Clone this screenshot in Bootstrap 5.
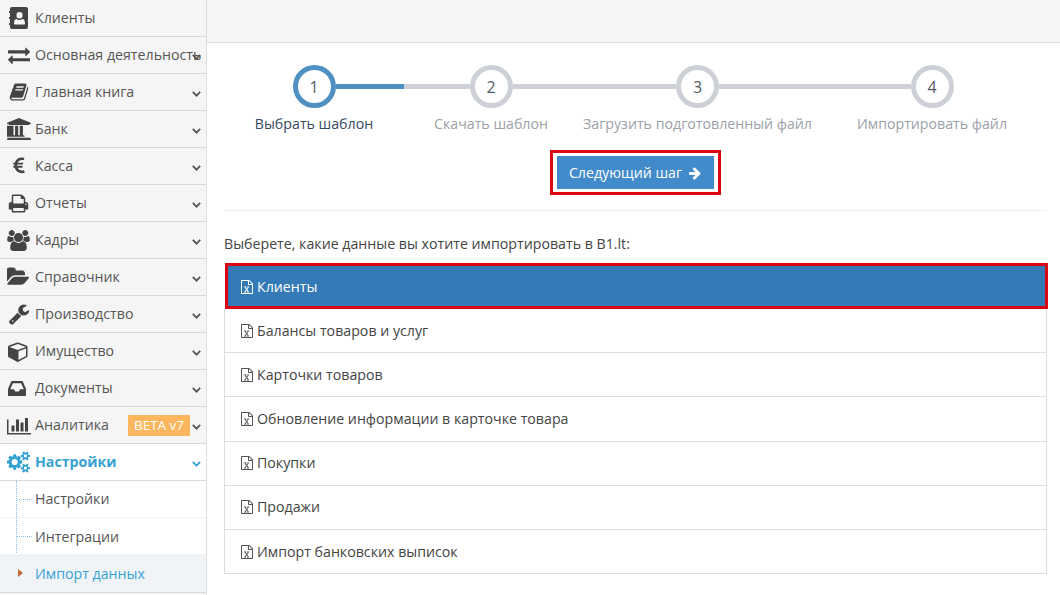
<!DOCTYPE html>
<html lang="ru">
<head>
<meta charset="utf-8">
<title>Импорт данных</title>
<link href="https://cdn.jsdelivr.net/npm/bootstrap@5.3.0/dist/css/bootstrap.min.css" rel="stylesheet">
<style>
html,body{height:595px;overflow:hidden}
body{font-family:"Open Sans","Noto Sans",sans-serif;font-size:14.2px;line-height:20px;color:#444;background:#fff}
.side{width:207px;flex:none;background:#f5f5f5;border-right:1px solid #ddd;height:595px}
.side-row{height:37px;border-bottom:1px solid #d9d9d9;color:#555;text-decoration:none;position:relative}
.side-ico{width:37px;margin-right:-2px;flex:none;color:#444}
.side-ico svg{display:block;fill:currentColor}
.chev{position:absolute;left:192px;top:50%;margin-top:-1px;width:9px;height:6px;fill:none;stroke:#555;stroke-width:2.2}
.beta{position:absolute;left:128px;top:8px;width:62px;height:21px;background:#fcb65e;color:#fff;font-size:13.5px;line-height:21px;text-align:center}
.side-on{background:#fff;color:#35a2d4;font-weight:700}
.side-on .side-ico{color:#35a2d4}
.side-on .chev{stroke:#35a2d4}
.subs{background:#fff;border-bottom:1px solid #d9d9d9;position:relative}
.subs::before{content:"";position:absolute;left:16px;top:0;bottom:3px;border-left:1px dotted #8fc3de}
.sub-row{height:37px;padding-left:35px;color:#555;border-bottom:1px solid #f3f3f3;position:relative}
.sub-row:nth-child(2){padding-top:1px}
.sub-row::before{content:"";position:absolute;left:17px;width:15px;top:18px;border-top:1px dotted #8fc3de}
.sub-row:last-child{border-bottom:0;background:#f1f4f7;color:#35a2d4}
.sub-row:last-child::before{border:solid transparent;border-width:4px 0 4px 5px;border-left-color:#c4683b;width:0;left:18px;top:14px}
.topbar{height:43px;background:#f5f5f5;border-bottom:1px solid #ddd}
.work{padding:22px 13px 0 17px}
.stepper{height:85px}
.step-col{flex:none}
.step-line{height:5px;background:#cdd0d6;flex:1 1 0}
.step-line.blue{background:#4f90c2}
.step-line.none{background:transparent}
.step-dot{width:43px;height:43px;flex:none;border:5px solid #cdd0d6;border-radius:50%;font-size:16px;color:#555b66;background:#fff}
.step-dot.blue{border-color:#4f90c2}
.step-text{margin-top:6px;color:#9ba1a9;white-space:nowrap;line-height:20px}
.step-text.on{color:#34495e}
.red-box{border:3px solid #dc0612;padding:3px 4px}
.next-btn{background:#428bca;color:#fff;width:157px;height:33px;border:0;border-radius:0;font-size:14.2px;line-height:20px;padding:0}
.next-btn:hover{background:#428bca;color:#fff}
.next-arrow{margin-left:6px}
.sep{height:1px;background:#eee;margin:15px 0 23px}
.lead-txt{line-height:20px;margin-bottom:10px;color:#444}
.files .list-group-item{padding:11.6px 16px;color:#444;line-height:20px;border-color:#ddd;border-radius:0}
.files .picked,.files .picked:first-child{background:#337ab7;color:#fff;border:3px solid #dc0612;padding:11px 14px 9px 13px;border-radius:0;margin:-1px -1px 0 1px}
.files svg{display:block;fill:#555;width:14px;height:14px;flex:none;margin:0 3px 0 -1px}
.files .picked svg{fill:#fff}
</style>
</head>
<body class="d-flex">
<svg width="0" height="0" class="d-none">
<defs>
<path id="xl" d="M1596 380q28 28 48 76t20 88v1152q0 40-28 68t-68 28h-1344q-40 0-68-28t-28-68v-1600q0-40 28-68t68-28h896q40 0 88 20t76 48zm-444-244v376h376q-10-29-22-41l-313-313q-12-12-41-22zm384 1528v-1024h-416q-40 0-68-28t-28-68v-416h-768v1536h1280zm-1026-171v107h281v-107h-75l103-161q5-7 10-16.5t7.5-13.5 3.5-4h2q1 4 5 10 2 4 4.5 7.5t6 8 6.5 8.5l107 161h-76v107h291v-107h-68l-192-273 195-282h67v-108h-279v107h74l-103 159q-4 7-10 16.5t-9 13.5l-2 3h-2q-1-4-5-10-6-11-17-23l-106-159h76v-107h-290v107h68l189 272-194 283h-68z"/>
</defs>
</svg>
<aside class="side">
<a class="side-row d-flex align-items-center"><span class="side-ico d-flex justify-content-center"><svg width="19" height="22" viewBox="0 0 19 22"><path fill-rule="evenodd" d="M3 0h14a2 2 0 0 1 2 2v18a2 2 0 0 1-2 2H3a2 2 0 0 1-2-2v-2H0v-2h1v-4H0v-2h1V6H0V4h1V2a2 2 0 0 1 2-2zm7.5 5a3 3 0 0 0-3 3.3 3 3 0 0 0 3 3.2 3 3 0 0 0 3-3.2 3 3 0 0 0-3-3.3zM5 16.5c0 .6.4 1 1 1h9c.6 0 1-.4 1-1 0-2.500-1-4.500-2.500-4.500-.8.600-1.800 1-3 1s-2.200-.4-3-1C6 12 5 14 5 16.500z"/></svg></span>Клиенты</a>
<a class="side-row d-flex align-items-center"><span class="side-ico d-flex justify-content-center"><svg width="22" height="22" viewBox="0 0 1792 1792"><path d="M1792 1184v192q0 13-9.500 22.500t-22.500 9.500h-1376v192q0 13-9.500 22.500t-22.500 9.500q-12 0-24-10l-319-320q-9-9-9-22 0-14 9-23l320-320q9-9 23-9 13 0 22.500 9.500t9.500 22.500v192h1376q13 0 22.500 9.500t9.500 22.500zm0-544q0 14-9 23l-320 320q-9 9-23 9-13 0-22.500-9.500t-9.500-22.500v-192h-1376q-13 0-22.500-9.500t-9.500-22.500v-192q0-13 9.500-22.500t22.500-9.500h1376v-192q0-14 9-23t23-9q12 0 24 10l319 319q9 9 9 23z"/></svg></span>Основная деятельность<svg class="chev" viewBox="0 0 11 7"><path d="M1 1l4.500 4.500L10 1"/></svg></a>
<a class="side-row d-flex align-items-center"><span class="side-ico d-flex justify-content-center"><svg width="20" height="20" viewBox="0 0 1792 1792"><path d="M1703 478q40 57 18 129l-275 906q-19 64-76.500 107.500t-122.500 43.500h-923q-77 0-148.500-53.500t-99.500-131.500q-24-67-2-127 0-4 3-27t4-37q1-8-3-21.500t-3-19.500q2-11 8-21t16.500-23.500 16.500-23.500q23-38 45-91.500t30-91.500q3-10 .5-30t-.5-28q3-11 17-28t17-23q21-36 42-92t25-90q1-9-2.500-32t.5-28q4-13 22-30.500t22-22.500q19-26 42.500-84.500t27.500-96.500q1-8-3-25.500t-2-26.500q2-8 9-18t18-23 17-21q8-12 16.500-30.500t15-35 16-36 19.500-32 26.500-23.500 36-11.500 47.500 5.500l-1 3q38-9 51-9h761q74 0 114 56t18 130l-274 906q-36 119-71.500 153.500t-128.500 34.500h-869q-27 0-38 15-11 16-1 43 24 70 144 70h923q29 0 56-15.500t35-41.500l300-987q7-22 5-57 38 15 59 43zm-1064 2q-4 13 2 22.500t20 9.500h608q13 0 25.500-9.500t16.500-22.500l21-64q4-13-2-22.500t-20-9.500h-608q-13 0-25.500 9.500t-16.500 22.500zm-83 256q-4 13 2 22.500t20 9.500h608q13 0 25.500-9.500t16.500-22.500l21-64q4-13-2-22.500t-20-9.500h-608q-13 0-25.500 9.500t-16.500 22.500z"/></svg></span>Главная книга<svg class="chev" viewBox="0 0 11 7"><path d="M1 1l4.500 4.500L10 1"/></svg></a>
<a class="side-row d-flex align-items-center"><span class="side-ico d-flex justify-content-center"><svg width="24" height="22" viewBox="0 0 1920 1792"><path d="M960 0l960 384v128h-128q0 26-20.500 45t-48.500 19h-1526q-28 0-48.500-19t-20.500-45h-128v-128zm-704 640h256v768h128v-768h256v768h128v-768h256v768h59q28 0 48.500 19t20.500 45v64h-1664v-64q0-26 20.500-45t48.500-19h59v-768zm1595 960q28 0 48.500 19t20.500 45v128h-1920v-128q0-26 20.500-45t48.500-19h1782z"/></svg></span>Банк<svg class="chev" viewBox="0 0 11 7"><path d="M1 1l4.500 4.500L10 1"/></svg></a>
<a class="side-row d-flex align-items-center"><span class="side-ico d-flex justify-content-center"><svg width="20" height="20" viewBox="0 0 1792 1792"><path d="M1360 1307l35 159q3 12-3 22.500t-17 14.500l-5 1q-4 2-10.500 3.500t-16 4.500-21.500 5.500-25.500 5-30 5-33.500 4.500-36.500 3-38.500 1q-234 0-409-130.500t-238-351.500h-95q-13 0-22.500-9.500t-9.500-22.500v-113q0-13 9.500-22.500t22.500-9.500h66q-2-57 1-105h-67q-14 0-23-9t-9-23v-114q0-14 9-23t23-9h98q67-210 243.500-338t400.500-128q102 0 194 23 11 3 20 15 6 11 3 24l-43 159q-3 13-14 19.500t-24 2.500l-4-1q-4-1-11.500-2.500l-17.500-3.500-22.500-3.500-26-3-29-2.500-29.500-1q-126 0-226 64t-150 176h468q16 0 25 12 10 12 7 26l-24 114q-5 26-32 26h-488q-3 47 0 105h459q15 0 25 12 9 12 6 27l-24 112q-2 11-11 18.500t-20 7.500h-387q48 117 149.500 185.500t228.500 68.500q18 0 36-1.500t33.500-3.500 29.500-4.500 24.500-5 18.500-4.500l12-3 5-2q13-5 26 2 12 7 15 21z"/></svg></span>Касса<svg class="chev" viewBox="0 0 11 7"><path d="M1 1l4.500 4.500L10 1"/></svg></a>
<a class="side-row d-flex align-items-center"><span class="side-ico d-flex justify-content-center"><svg width="21" height="21" viewBox="0 0 1792 1792"><path d="M448 1536h896v-256h-896v256zm0-640h896v-384h-160q-40 0-68-28t-28-68v-160h-640v640zm1152 64q0-26-19-45t-45-19-45 19-19 45 19 45 45 19 45-19 19-45zm128 0v416q0 13-9.500 22.500t-22.500 9.500h-224v160q0 40-28 68t-68 28h-960q-40 0-68-28t-28-68v-160h-224q-13 0-22.500-9.500t-9.500-22.500v-416q0-79 56.500-135.500t135.500-56.500h64v-544q0-40 28-68t68-28h672q40 0 88 20t76 48l152 152q28 28 48 76t20 88v256h64q79 0 135.500 56.500t56.500 135.500z"/></svg></span>Отчеты<svg class="chev" viewBox="0 0 11 7"><path d="M1 1l4.500 4.500L10 1"/></svg></a>
<a class="side-row d-flex align-items-center"><span class="side-ico d-flex justify-content-center"><svg width="23" height="21" viewBox="0 0 1920 1792"><path d="M593 896q-162 5-265 128h-134q-82 0-138-40.500t-56-118.500q0-353 124-353 6 0 43.500 21t97.500 42.500 119 21.500q67 0 133-23-5 37-5 66 0 139 81 256zm1071 637q0 120-73 189.500t-194 69.500h-874q-121 0-194-69.500t-73-189.500q0-53 3.500-103.500t14-109 26.500-108.500 43-97.500 62-81 85.500-53.500 111.500-20q10 0 43 21.500t73 48 107 48 135 21.500 135-21.500 107-48 73-48 43-21.500q61 0 111.500 20t85.500 53.500 62 81 43 97.500 26.500 108.500 14 109 3.500 103.500zm-1024-1277q0 106-75 181t-181 75-181-75-75-181 75-181 181-75 181 75 75 181zm704 384q0 159-112.500 271.500t-271.500 112.500-271.500-112.500-112.500-271.500 112.500-271.500 271.500-112.500 271.500 112.500 112.500 271.500zm576 225q0 78-56 118.500t-138 40.500h-134q-103-123-265-128 81-117 81-256 0-29-5-66 66 23 133 23 59 0 119-21.500t97.500-42.500 43.500-21q124 0 124 353zm-128-609q0 106-75 181t-181 75-181-75-75-181 75-181 181-75 181 75 75 181z"/></svg></span>Кадры<svg class="chev" viewBox="0 0 11 7"><path d="M1 1l4.500 4.500L10 1"/></svg></a>
<a class="side-row d-flex align-items-center"><span class="side-ico d-flex justify-content-center"><svg width="23" height="22" viewBox="0 0 1920 1792"><path d="M1845 931q0 35-53 93l-336 396q-43 51-120.500 86.500t-143.500 35.500h-1088q-34 0-60.500-13t-26.500-43q0-35 53-93l336-396q43-51 120.500-86.500t143.500-35.500h1088q34 0 60.500 13t26.500 43zm-343-344v160h-832q-94 0-197 47.500t-164 119.500l-337 396-5 6q0-4-.5-12.500t-.5-12.500v-960q0-92 66-158t158-66h320q92 0 158 66t66 158v32h544q92 0 158 66t66 158z"/></svg></span>Справочник<svg class="chev" viewBox="0 0 11 7"><path d="M1 1l4.500 4.500L10 1"/></svg></a>
<a class="side-row d-flex align-items-center"><span class="side-ico d-flex justify-content-center"><svg width="22" height="22" viewBox="0 0 1792 1792"><path d="M448 1472q0-26-19-45t-45-19-45 19-19 45 19 45 45 19 45-19 19-45zm644-420l-682 682q-37 37-90 37-52 0-91-37l-106-108q-38-36-38-90 0-53 38-91l681-681q39 98 114.500 173.500t173.500 114.500zm634-435q0 39-23 106-47 134-164.500 217.500t-258.500 83.500q-185 0-316.500-131.500t-131.500-316.500 131.500-316.500 316.500-131.500q58 0 121.500 16.500t107.500 46.500q16 11 16 28t-16 28l-293 169v224l193 107q5-3 79-48.500t135.500-81 70.500-35.500q15 0 23.500 10t8.500 25z"/></svg></span>Производство<svg class="chev" viewBox="0 0 11 7"><path d="M1 1l4.500 4.500L10 1"/></svg></a>
<a class="side-row d-flex align-items-center"><span class="side-ico d-flex justify-content-center"><svg width="21" height="21" viewBox="0 0 1792 1792"><path d="M896 1629l640-349v-636l-640 233v752zm-64-865l698-254-698-254-698 254zm832-252v768q0 35-18 65t-49 47l-704 384q-28 16-61 16t-61-16l-704-384q-31-17-49-47t-18-65v-768q0-40 23-73t61-47l704-256q22-8 44-8t44 8l704 256q38 14 61 47t23 73z"/></svg></span>Имущество<svg class="chev" viewBox="0 0 11 7"><path d="M1 1l4.500 4.500L10 1"/></svg></a>
<a class="side-row d-flex align-items-center"><span class="side-ico d-flex justify-content-center"><svg width="21" height="21" viewBox="0 0 1792 1792"><path d="M1023 960h316q-1-3-2.500-8.500t-2.500-7.500l-212-496h-708l-212 496q-1 3-2.500 8.500t-2.500 7.500h316l95 192h320zm513 30v482q0 26-19 45t-45 19h-1408q-26 0-45-19t-19-45v-482q0-62 25-123l238-552q10-25 36.500-42t52.500-17h832q26 0 52.500 17t36.500 42l238 552q25 61 25 123z"/></svg></span>Документы<svg class="chev" viewBox="0 0 11 7"><path d="M1 1l4.500 4.500L10 1"/></svg></a>
<a class="side-row d-flex align-items-center"><span class="side-ico d-flex justify-content-center"><svg width="24" height="21" viewBox="0 0 2048 1792"><path d="M640 896v512h-256v-512h256zm384-512v1024h-256v-1024h256zm1024 1152v128h-2048v-1280h128v1152h1920zm-640-896v768h-256v-768h256zm384-384v1152h-256v-1152h256z"/></svg></span>Аналитика<span class="beta">BETA v7</span><svg class="chev" viewBox="0 0 11 7"><path d="M1 1l4.500 4.500L10 1"/></svg></a>
<a class="side-row side-on d-flex align-items-center"><span class="side-ico d-flex justify-content-center"><svg width="23" height="22" viewBox="0 0 1920 1792"><path d="M896 896q0-106-75-181t-181-75-181 75-75 181 75 181 181 75 181-75 75-181zm768 512q0-52-38-90t-90-38-90 38-38 90q0 53 37.500 90.500t90.500 37.500 90.500-37.500 37.500-90.500zm0-1024q0-52-38-90t-90-38-90 38-38 90q0 53 37.500 90.500t90.500 37.500 90.500-37.500 37.500-90.500zm-384 421v185q0 10-7 19.500t-16 10.500l-155 24q-11 35-32 76 34 48 90 115 7 11 7 20 0 12-7 19-23 30-82.500 89.500t-78.500 59.500q-11 0-21-7l-115-90q-37 19-77 31-11 108-23 155-7 24-30 24h-186q-11 0-20-7.500t-10-17.500l-23-153q-34-10-75-31l-118 89q-7 7-20 7-11 0-21-8-144-133-144-160 0-9 7-19 10-14 41-53t47-61q-23-44-35-82l-152-24q-10-1-17-9.500t-7-19.500v-185q0-10 7-19.500t16-10.500l155-24q11-35 32-76-34-48-90-115-7-11-7-20 0-12 7-20 22-30 82-89t79-59q11 0 21 7l115 90q34-18 77-32 11-108 23-154 7-24 30-24h186q11 0 20 7.500t10 17.500l23 153q34 10 75 31l118-89q8-7 20-7 11 0 21 8 144 133 144 160 0 8-7 19-12 16-42 54t-45 60q23 48 34 82l152 23q10 2 17 10.500t7 19.500zm640 533v140q0 16-149 31-12 27-30 52 51 113 51 138 0 4-4 7-122 71-124 71-8 0-46-47t-52-68q-20 2-30 2t-30-2q-14 21-52 68t-46 47q-2 0-124-71-4-3-4-7 0-25 51-138-18-25-30-52-149-15-149-31v-140q0-16 149-31 13-29 30-52-51-113-51-138 0-4 4-7 4-2 35-20t59-34 30-16q8 0 46 46.500t52 67.500q20-2 30-2t30 2q51-71 92-112l6-2q4 0 124 70 4 3 4 7 0 25-51 138 17 23 30 52 149 15 149 31zm0-1024v140q0 16-149 31-12 27-30 52 51 113 51 138 0 4-4 7-122 71-124 71-8 0-46-47t-52-68q-20 2-30 2t-30-2q-14 21-52 68t-46 47q-2 0-124-71-4-3-4-7 0-25 51-138-18-25-30-52-149-15-149-31v-140q0-16 149-31 13-29 30-52-51-113-51-138 0-4 4-7 4-2 35-20t59-34 30-16q8 0 46 46.500t52 67.500q20-2 30-2t30 2q51-71 92-112l6-2q4 0 124 70 4 3 4 7 0 25-51 138 17 23 30 52 149 15 149 31z"/></svg></span>Настройки<svg class="chev" viewBox="0 0 11 7"><path d="M1 1l4.500 4.500L10 1"/></svg></a>
<div class="subs">
<div class="sub-row d-flex align-items-center">Настройки</div>
<div class="sub-row d-flex align-items-center">Интеграции</div>
<div class="sub-row d-flex align-items-center">Импорт данных</div>
</div>
</aside>
<main class="flex-grow-1">
<div class="topbar"></div>
<div class="work">
<div class="stepper d-flex">
<div class="step-col d-flex flex-column align-items-center" style="width:180px">
<div class="d-flex align-items-center w-100"><span class="step-line none"></span><span class="step-dot blue d-flex align-items-center justify-content-center">1</span><span class="step-line blue"></span></div>
<div class="step-text on">Выбрать шаблон</div></div>
<div class="step-col d-flex flex-column align-items-center" style="width:174px">
<div class="d-flex align-items-center w-100"><span class="step-line"></span><span class="step-dot d-flex align-items-center justify-content-center">2</span><span class="step-line"></span></div>
<div class="step-text">Скачать шаблон</div></div>
<div class="step-col d-flex flex-column align-items-center" style="width:239px">
<div class="d-flex align-items-center w-100"><span class="step-line"></span><span class="step-dot d-flex align-items-center justify-content-center">3</span><span class="step-line"></span></div>
<div class="step-text">Загрузить подготовленный файл</div></div>
<div class="step-col d-flex flex-column align-items-center" style="width:230px">
<div class="d-flex align-items-center w-100"><span class="step-line"></span><span class="step-dot d-flex align-items-center justify-content-center">4</span><span class="step-line none"></span></div>
<div class="step-text">Импортировать файл</div></div>
</div>
<div class="d-flex justify-content-center">
<div class="red-box"><button type="button" class="btn next-btn d-flex align-items-center justify-content-center">Следующий шаг<svg class="next-arrow" width="14" height="14" viewBox="0 0 1792 1792" fill="currentColor"><path d="M1600 960q0 54-37 91l-651 651q-39 37-91 37-51 0-90-37l-75-75q-38-38-38-91t38-91l293-293h-704q-52 0-84.500-37.500t-32.500-90.500v-128q0-53 32.500-90.500t84.500-37.500h704l-293-294q-38-36-38-90t38-90l75-75q38-38 90-38 53 0 91 38l651 651q37 35 37 90z"/></svg></button></div>
</div>
<div class="sep"></div>
<div class="lead-txt">Выберете, какие данные вы хотите импортировать в B1.lt:</div>
<div class="list-group files">
<a class="list-group-item picked d-flex align-items-center"><svg viewBox="0 0 1792 1792"><use href="#xl"/></svg>Клиенты</a>
<a class="list-group-item d-flex align-items-center"><svg viewBox="0 0 1792 1792"><use href="#xl"/></svg>Балансы товаров и услуг</a>
<a class="list-group-item d-flex align-items-center"><svg viewBox="0 0 1792 1792"><use href="#xl"/></svg>Карточки товаров</a>
<a class="list-group-item d-flex align-items-center"><svg viewBox="0 0 1792 1792"><use href="#xl"/></svg>Обновление информации в карточке товара</a>
<a class="list-group-item d-flex align-items-center"><svg viewBox="0 0 1792 1792"><use href="#xl"/></svg>Покупки</a>
<a class="list-group-item d-flex align-items-center"><svg viewBox="0 0 1792 1792"><use href="#xl"/></svg>Продажи</a>
<a class="list-group-item d-flex align-items-center"><svg viewBox="0 0 1792 1792"><use href="#xl"/></svg>Импорт банковских выписок</a>
</div>
</div>
</main>
<script src="https://cdn.jsdelivr.net/npm/bootstrap@5.3.0/dist/js/bootstrap.bundle.min.js"></script>
</body>
</html>
